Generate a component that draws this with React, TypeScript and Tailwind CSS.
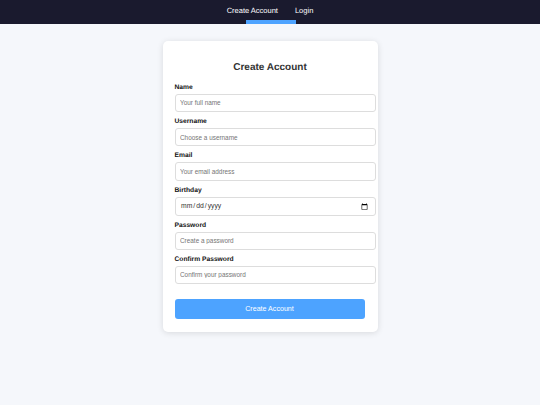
const inputClass =
  'block w-[201px] h-[18.4px] rounded-[3px] border border-[#dddddd] bg-white px-[4.5px] text-[6.4px] text-[#333333] outline-none placeholder:text-[#757575]';

const labelClass = 'mb-[0.9px] block text-[6.7px] leading-[10px] font-bold text-[#111111]';

const fields = [
  { label: 'Name', type: 'text', placeholder: 'Your full name' },
  { label: 'Username', type: 'text', placeholder: 'Choose a username' },
  { label: 'Email', type: 'email', placeholder: 'Your email address' },
];

const lowerFields = [
  { label: 'Password', type: 'password', placeholder: 'Create a password' },
  { label: 'Confirm Password', type: 'password', placeholder: 'Confirm your password' },
];

function Field({ label, type, placeholder }: { label: string; type: string; placeholder: string }) {
  return (
    <div className="mb-[5px]">
      <label className={labelClass}>{label}</label>
      <input type={type} placeholder={placeholder} className={inputClass} />
    </div>
  );
}

export default function App() {
  return (
    <div className="min-h-[405px] bg-[#f5f7fb] font-['Liberation_Sans',Arial,sans-serif] [text-rendering:geometricPrecision]">
      {/* Nav */}
      <nav className="flex h-[23.5px] items-start justify-center gap-[17px] bg-[#1a1a2e] pt-[5px] text-[7.5px] leading-[11px] text-white">
        <a className="relative h-[18.5px] whitespace-nowrap">
          Create Account
          <span className="absolute bottom-0 left-[19px] h-[3.5px] w-[50.5px] bg-[#4da3ff]" />
        </a>
        <a>Login</a>
      </nav>

      {/* Card */}
      <main className="mx-auto mt-[17px] h-[291px] w-[215px] rounded-[5px] bg-white px-3 pt-[20px] shadow-[0_1px_6px_rgba(0,0,0,0.12)]">
        <h1 className="mb-[9.3px] text-center text-[10px] leading-[13px] font-bold text-[#333333]">Create Account</h1>

        {fields.map(f => (
          <Field key={f.label} {...f} />
        ))}

        <div className="mb-[4.4px]">
          <label className={labelClass}>Birthday</label>
          <input type="date" className="block h-[19.7px] w-[201px] rounded-[3px] border border-[#dddddd] bg-white px-[4.5px] text-[6.8px] text-[#333333] outline-none" />
        </div>

        {lowerFields.map(f => (
          <Field key={f.label} {...f} />
        ))}

        <button className="mt-[14.4px] block h-[20.6px] w-[190px] rounded-[3px] bg-[#4da3ff] text-[7.1px] text-white">
          Create Account
        </button>
      </main>
    </div>
  );
}
